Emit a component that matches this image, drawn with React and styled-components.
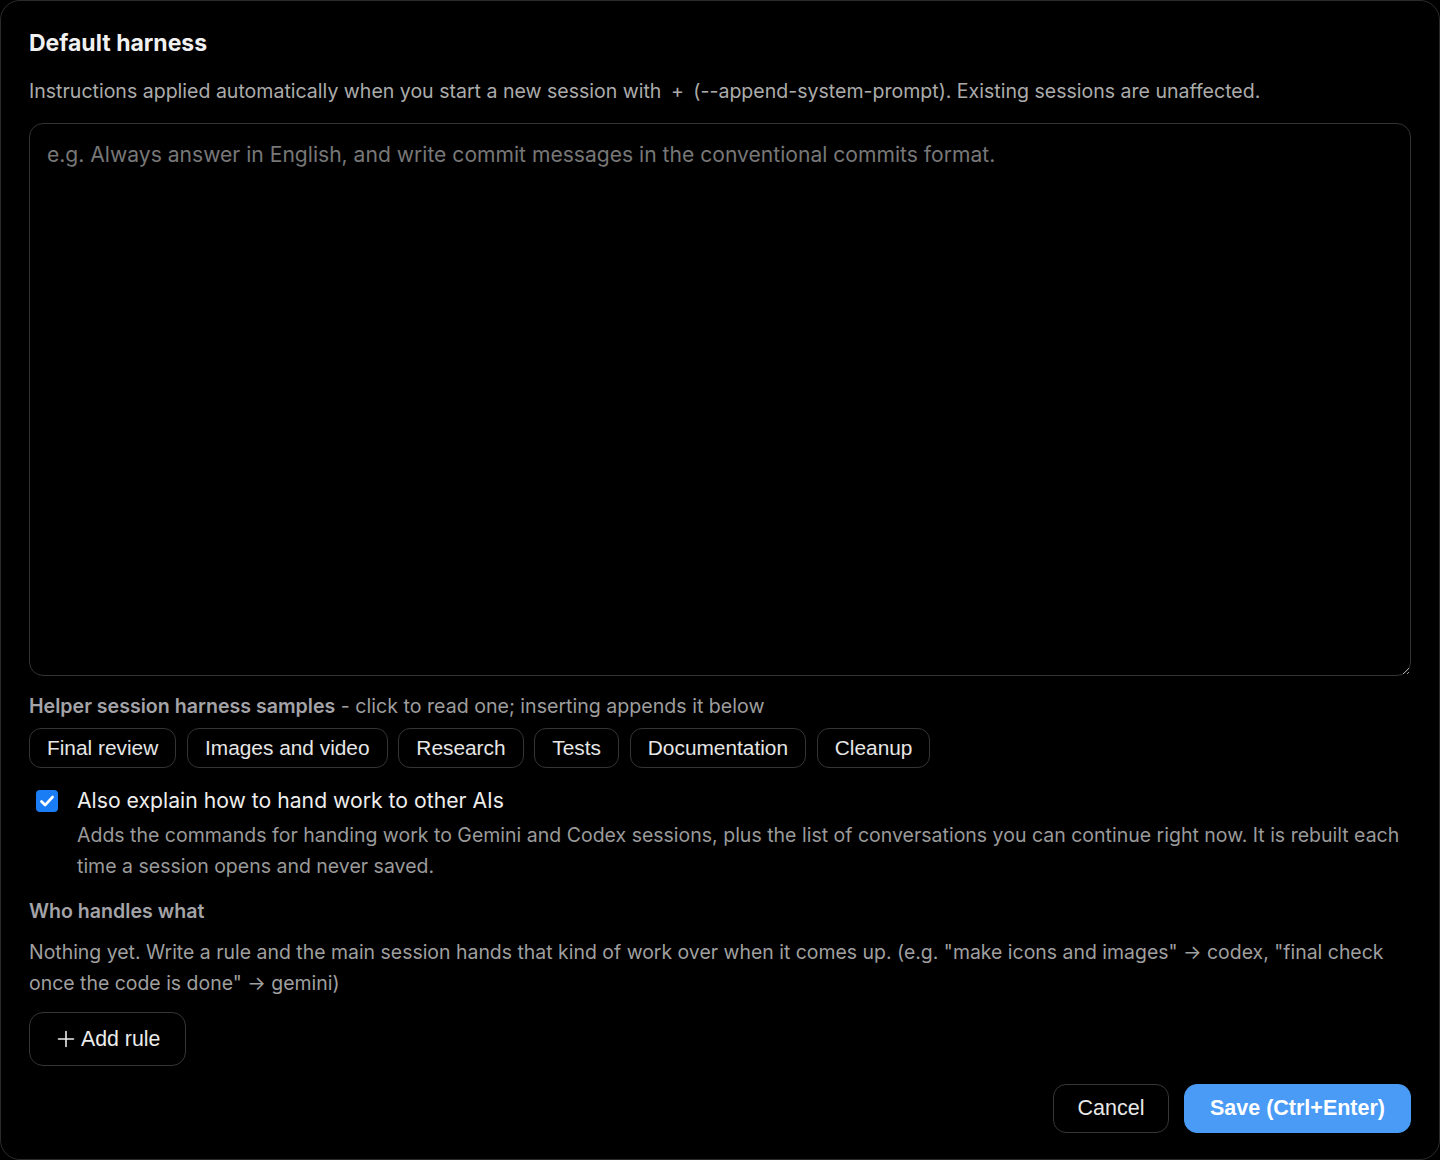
import styled, { createGlobalStyle } from "styled-components";
import { useState } from "react";

const GlobalStyle = createGlobalStyle`
  html, body {
    margin: 0;
    padding: 0;
    background: #000;
  }
  body {
    font-family: Inter, "Noto Sans", sans-serif;
  }
`;

const samples = [
  "Final review",
  "Images and video",
  "Research",
  "Tests",
  "Documentation",
  "Cleanup",
];

const App = () => {
  const [handoff, setHandoff] = useState(true);
  const [text, setText] = useState("");

  return (
    <>
      <GlobalStyle />
      <Dialog>
        <Title>Default harness</Title>
        <Lead>
          Instructions applied automatically when you start a new session with{" "}
          <span className="plus">+</span> (--append-system-prompt). Existing
          sessions are unaffected.
        </Lead>
        <Editor
          value={text}
          onChange={(e) => setText(e.target.value)}
          placeholder="e.g. Always answer in English, and write commit messages in the conventional commits format."
        />
        <SectionLabel>
          <b>Helper session harness samples</b> - click to read one; inserting
          appends it below
        </SectionLabel>
        <ChipRow>
          {samples.map((s) => (
            <Chip key={s}>{s}</Chip>
          ))}
        </ChipRow>
        <CheckRow>
          <CheckBox
            type="checkbox"
            checked={handoff}
            onChange={() => setHandoff(!handoff)}
          />
          <div>
            <CheckTitle>Also explain how to hand work to other AIs</CheckTitle>
            <CheckHint>
              Adds the commands for handing work to Gemini and Codex sessions,
              plus the list of conversations you can continue right now. It is
              rebuilt each time a session opens and never saved.
            </CheckHint>
          </div>
        </CheckRow>
        <SectionLabel $gap={15}>
          <b>Who handles what</b>
        </SectionLabel>
        <Note>
          Nothing yet. Write a rule and the main session hands that kind of
          work over when it comes up. (e.g. "make icons and images" → codex,
          "final check once the code is done" → gemini)
        </Note>
        <AddButton>
          <svg width="18" height="18" viewBox="0 0 18 18">
            <path
              d="M9 1.5v15M1.5 9h15"
              stroke="currentColor"
              strokeWidth="1.6"
              strokeLinecap="round"
            />
          </svg>
          Add rule
        </AddButton>
        <Footer>
          <FooterButton>Cancel</FooterButton>
          <FooterButton $primary>Save (Ctrl+Enter)</FooterButton>
        </Footer>
      </Dialog>
    </>
  );
};

export default App;

const Dialog = styled.div`
  box-sizing: border-box;
  width: 1440px;
  height: 1160px;
  background: #000;
  border: 1px solid #2b2b2b;
  border-radius: 20px;
  padding: 27px 28px 26px 28px;
  display: flex;
  flex-direction: column;
  color: #ececec;
`;

const Title = styled.h2`
  margin: 0;
  font-size: 23px;
  font-weight: 700;
  line-height: 30px;
  color: #f0f0f0;
`;

const Lead = styled.p`
  margin: 18px 0 0;
  font-size: 19.55px;
  line-height: 30px;
  color: #ababab;

  .plus {
    padding: 0 4px;
  }
`;

const Editor = styled.textarea`
  box-sizing: border-box;
  margin-top: 17px;
  width: 100%;
  height: 553px;
  background: #000;
  border: 1px solid #333;
  border-radius: 14px;
  padding: 16px 17px;
  font-family: Inter, "Noto Sans", sans-serif;
  font-size: 21.1px;
  line-height: 30px;
  color: #eee;
  resize: vertical;
  outline: none;

  &::placeholder {
    color: #777;
  }
`;

const SectionLabel = styled.div`
  margin-top: ${(p) => p.$gap || 16}px;
  font-size: 19.6px;
  line-height: 28px;
  color: #9d9d9d;

  b {
    font-weight: 600;
    color: #a3a3a8;
  }
`;

const ChipRow = styled.div`
  display: flex;
  flex-wrap: wrap;
  gap: 10.8px;
  margin-top: 8px;
`;

const Chip = styled.button`
  height: 40px;
  padding: 0 17px;
  background: #000;
  border: 1px solid #343434;
  border-radius: 12px;
  color: #e6e6e6;
  font-family: "Liberation Sans", Arial, sans-serif;
  font-size: 20.85px;
  cursor: pointer;
`;

const CheckRow = styled.label`
  display: flex;
  align-items: flex-start;
  gap: 19px;
  margin-top: 18px;
  padding-left: 7px;
`;

const CheckBox = styled.input`
  appearance: none;
  flex: none;
  width: 22px;
  height: 22px;
  margin: 4px 0 0;
  border-radius: 4px;
  background: #1a7df6
    url("data:image/svg+xml,%3Csvg xmlns='http://www.w3.org/2000/svg' viewBox='0 0 22 22'%3E%3Cpath d='M5.5 11.5l3.6 3.6 7.4-8' fill='none' stroke='white' stroke-width='2.8' stroke-linecap='round' stroke-linejoin='round'/%3E%3C/svg%3E")
    center / 100% no-repeat;
  cursor: pointer;

  &:not(:checked) {
    background: transparent;
    border: 1px solid #666;
  }
`;

const CheckTitle = styled.div`
  font-size: 21.2px;
  line-height: 29px;
  color: #ededed;
`;

const CheckHint = styled.div`
  margin-top: 5px;
  font-size: 19.5px;
  line-height: 31px;
  color: #9a9a9a;
`;

const Note = styled.p`
  margin: 12px 0 0;
  font-size: 19.45px;
  line-height: 31px;
  color: #9f9f9f;
`;

const AddButton = styled.button`
  align-self: flex-start;
  display: flex;
  align-items: center;
  gap: 6px;
  margin-top: 13px;
  height: 54px;
  padding: 0 25px 0 27px;
  background: #000;
  border: 1px solid #353535;
  border-radius: 14px;
  color: #ececec;
  font-family: "Liberation Sans", Arial, sans-serif;
  font-size: 21.3px;
  cursor: pointer;
`;

const Footer = styled.div`
  margin-top: auto;
  display: flex;
  justify-content: flex-end;
  gap: 15px;
`;

const FooterButton = styled.button`
  height: 49px;
  padding: 0 ${(p) => (p.$primary ? 25 : 23.5)}px;
  border-radius: 13px;
  font-family: "Liberation Sans", Arial, sans-serif;
  font-size: 21.5px;
  font-weight: ${(p) => (p.$primary ? 700 : 400)};
  color: ${(p) => (p.$primary ? "#fff" : "#e8e8e8")};
  background: ${(p) => (p.$primary ? "#4a9bf6" : "#000")};
  border: 1px solid ${(p) => (p.$primary ? "#4a9bf6" : "#363636")};
  cursor: pointer;
`;
